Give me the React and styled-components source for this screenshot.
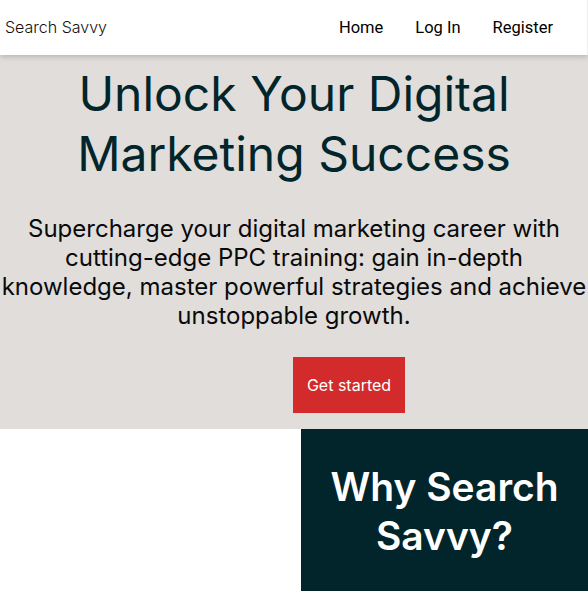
import React from 'react';
import styled, { createGlobalStyle } from 'styled-components';

const GlobalStyle = createGlobalStyle`
  html, body {
    margin: 0;
    padding: 0;
    background: #ffffff;
    font-family: 'Inter', 'Liberation Sans', sans-serif;
    overflow: hidden;
  }
`;

const Nav = styled.nav`
  display: flex;
  align-items: center;
  justify-content: space-between;
  height: 54px;
  padding: 0 18px 1px 5px;
  background: #ffffff;
  box-shadow: 0 2px 5px rgba(0, 0, 0, 0.18);
  border-right: 1px solid #eeeeee;
  position: relative;
  z-index: 1;
`;

const Brand = styled.a`
  font-family: 'Inter', sans-serif;
  font-size: 16px;
  font-weight: 300;
  color: #111111;
  text-decoration: none;
`;

const Links = styled.ul`
  display: flex;
  list-style: none;
  margin: 0;
  padding: 0;
`;

const NavLink = styled.a`
  display: block;
  padding: 0 16px;
  font-family: 'Roboto', sans-serif;
  font-size: 16.5px;
  color: #000000;
  text-decoration: none;
`;

const Hero = styled.header`
  background: #e0dddb;
  padding: 9px 0 16px;
  text-align: center;
`;

const Heading = styled.h1`
  margin: 0 auto;
  font-size: 48px;
  font-weight: 400;
  line-height: 60px;
  color: #01252a;
`;

const Lead = styled.p`
  margin: 30px -10px 27px;
  font-size: 24px;
  line-height: 29px;
  white-space: nowrap;
  color: #0a0a0a;
`;

const CTA = styled.button`
  display: block;
  margin-left: 293px;
  width: 112px;
  height: 56px;
  border: none;
  background: #d32b2b;
  color: #ffffff;
  font-family: 'Inter', sans-serif;
  font-size: 16px;
  cursor: pointer;
`;

const Features = styled.section`
  display: grid;
  grid-template-columns: 301px 1fr;
  min-height: 170px;
`;

const Blank = styled.div`
  background: #ffffff;
`;

const WhyBox = styled.div`
  background: #01252a;
  padding: 33px 10px;
  text-align: center;
`;

const WhyTitle = styled.h2`
  margin: 0;
  font-size: 39px;
  font-weight: 600;
  line-height: 49px;
  color: #ffffff;
`;

export default function App() {
  return (
    <>
      <GlobalStyle />
      <Nav>
        <Brand href="#">Search Savvy</Brand>
        <Links>
          <li><NavLink href="#">Home</NavLink></li>
          <li><NavLink href="#">Log In</NavLink></li>
          <li><NavLink href="#">Register</NavLink></li>
        </Links>
      </Nav>
      <Hero>
        <Heading>Unlock Your Digital<br />Marketing Success</Heading>
        <Lead>
          Supercharge your digital marketing career with<br />
          cutting-edge PPC training: gain in-depth<br />
          knowledge, master powerful strategies and achieve<br />
          unstoppable growth.
        </Lead>
        <CTA>Get started</CTA>
      </Hero>
      <Features>
        <Blank />
        <WhyBox>
          <WhyTitle>Why Search Savvy?</WhyTitle>
        </WhyBox>
      </Features>
    </>
  );
}
